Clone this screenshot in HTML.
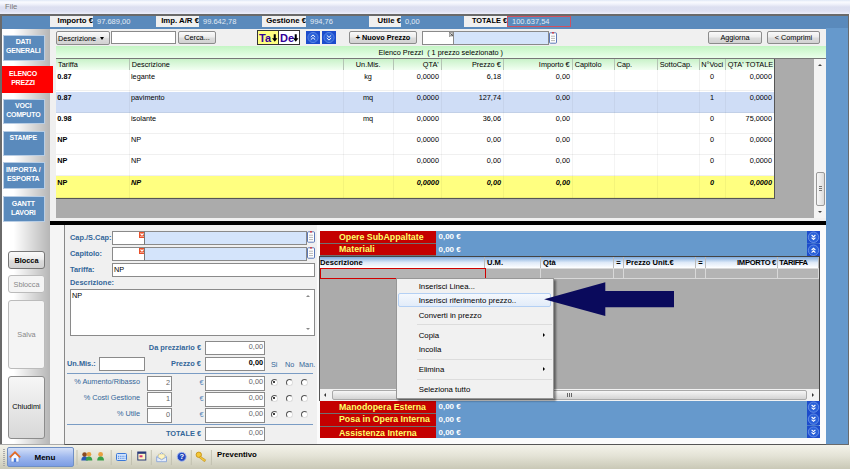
<!DOCTYPE html>
<html lang="it">
<head>
<meta charset="utf-8">
<title>Preventivo - Elenco Prezzi</title>
<style>
*{box-sizing:border-box;margin:0;padding:0}
html,body{width:850px;height:469px;overflow:hidden;background:#fff}
body{position:relative;font-family:"Liberation Sans",sans-serif;font-size:7.3px;color:#000;line-height:1}
.a{position:absolute;white-space:nowrap}
.b{font-weight:bold}
.r{text-align:right}
.c{text-align:center}
/* top */
#menubar{left:0;top:0;width:850px;height:14px;background:linear-gradient(#dfe8f6 0,#fafbfe 2px,#f1f3fb 4px,#dcdff0 7px,#dde0f1 11px,#eceefa 14px)}
#file{left:5px;top:3.2px;font-size:7.7px;color:#777}
#frame{left:0;top:14.3px;width:848.8px;height:430.7px;background:#6a6a6a}
#band{left:1.7px;top:15.6px;width:846.5px;height:13px;background:#5a8abc}
#rightcol{left:826px;top:28.3px;width:22.2px;height:416.2px;background:#6699cc}
#rightwhite{left:849px;top:14px;width:1px;height:431px;background:#fff}
.lab{top:16px;height:11px;background:#f0f0f0;font-weight:bold;font-size:7.8px;text-align:right;padding-top:1px;padding-right:0;overflow:hidden}
.val{top:16px;height:11px;background:#5a8abc;color:#e2eaf5;font-size:7.5px;padding:1.5px 0 0 4px}
/* sidebar */
#side{left:1.7px;top:28.5px;width:48.3px;height:416px;background:linear-gradient(90deg,#fff 0,#fff 24%,#b6b6b6 100%)}
.sb{left:3px;width:41.5px;padding-right:1px;background:#5a8abc;border:1px solid #b8cde4;color:#fff;font-weight:bold;font-size:7px;letter-spacing:-0.2px;text-align:center;line-height:9.2px;white-space:normal;padding-top:1.5px}
#content{left:50px;top:29px;width:776px;height:193px;background:#f0f0f0}
.btn{border:1px solid #8c8c8c;border-radius:2px;background:linear-gradient(#fafafa,#ececec 45%,#dcdcdc 55%,#d2d2d2);text-align:center;font-size:7.3px}
.inp{border:1px solid #8a8a8a;background:#fff}
.hd{top:59.3px;height:11px;background:linear-gradient(#c9f2c9,#f2fff2);border-right:1px solid #b4c4b4;padding:2px 2px 0 2px;font-size:7.3px;overflow:hidden}
.row{left:56px;width:718px;height:21px;border-bottom:1px solid rgba(0,0,0,0.06)}
.cell{top:2.3px;font-size:7.3px}
.vl{top:70px;width:1px;height:128px;background:rgba(0,0,0,0.045)}
</style>
</head>
<body>
<div class="a" id="menubar"></div>
<div class="a" id="file">File</div>
<div class="a" id="frame"></div>
<div class="a" id="band"></div>
<div class="a" id="rightcol"></div>
<div class="a" id="rightwhite"></div>

<!-- info band -->
<div class="a lab" style="left:50px;width:43px">Importo €</div>
<div class="a val" style="left:93px;width:63px">97.689,00</div>
<div class="a lab" style="left:156px;width:43px">Imp. A/R €</div>
<div class="a val" style="left:199px;width:63px">99.642,78</div>
<div class="a lab" style="left:262px;width:44px">Gestione €</div>
<div class="a val" style="left:306px;width:63px">994,76</div>
<div class="a lab" style="left:369px;width:32px">Utile €</div>
<div class="a val" style="left:401px;width:63px">0,00</div>
<div class="a lab" style="left:464px;width:43px;font-size:7.4px;padding-top:1.3px">TOTALE €</div>
<div class="a val" style="left:507px;width:64px;border:1px solid #d05060;padding-top:1px;padding-left:4px">100.637,54</div>

<!-- sidebar -->
<div class="a" id="side"></div>
<div class="a sb" style="top:34.7px;height:26.3px">DATI GENERALI</div>
<div class="a sb" style="left:2px;top:66px;width:51px;height:26.5px;background:#ff0000;border:1px solid #ff0000;padding-right:9px;z-index:3">ELENCO PREZZI</div>
<div class="a sb" style="top:98.5px;height:25.5px">VOCI COMPUTO</div>
<div class="a sb" style="top:130.5px;height:25.5px">STAMPE</div>
<div class="a sb" style="top:162px;height:27px;letter-spacing:-0.1px">IMPORTA / ESPORTA</div>
<div class="a sb" style="top:196px;height:26px">GANTT LAVORI</div>

<div class="a" id="content"></div>
<!-- toolbar -->
<div class="a btn" style="left:56px;top:31px;width:54px;height:14px;text-align:left;padding:2.5px 0 0 1px">Descrizione</div>
<div class="a" style="left:100px;top:37px;width:0;height:0;border-left:2.5px solid transparent;border-right:2.5px solid transparent;border-top:3px solid #000"></div>
<div class="a inp" style="left:111px;top:31px;width:65px;height:13px"></div>
<div class="a btn" style="left:178px;top:31px;width:38px;height:13px;padding-top:2px">Cerca...</div>
<div class="a b" style="left:257px;top:30px;width:22px;height:15px;background:#ffff80;border:1px solid #333;color:#330099;font-size:11px;padding:1.5px 0 0 1px">Ta</div><svg class="a" style="left:272px;top:33.5px" width="5.5" height="8.5" viewBox="0 0 7 10"><path d="M2.2 0 H4.8 V5 H7 L3.5 9.5 L0 5 H2.2 Z" fill="#000"/></svg>
<div class="a b" style="left:278px;top:30px;width:22px;height:15px;background:#fff;border:1px solid #333;color:#330099;font-size:11px;padding:1.5px 0 0 1px">De</div><svg class="a" style="left:293.3px;top:33.5px" width="5.5" height="8.5" viewBox="0 0 7 10"><path d="M2.2 0 H4.8 V5 H7 L3.5 9.5 L0 5 H2.2 Z" fill="#000"/></svg>
<svg class="a" style="left:305.9px;top:31px" width="14" height="13" viewBox="0 0 14 13"><rect width="14" height="13" fill="#1c4ccc"/><circle cx="7" cy="6.5" r="5.1" fill="#2a60d8" stroke="#6a96ea" stroke-width="0.7"/><path d="M4.8 6 L7 3.9 L9.2 6 M4.8 8.7 L7 6.6 L9.2 8.7" fill="none" stroke="#fff" stroke-width="1"/></svg>
<svg class="a" style="left:321.9px;top:31px" width="14" height="13" viewBox="0 0 14 13"><rect width="14" height="13" fill="#1c4ccc"/><circle cx="7" cy="6.5" r="5.1" fill="#2a60d8" stroke="#6a96ea" stroke-width="0.7"/><path d="M4.8 4.3 L7 6.4 L9.2 4.3 M4.8 7 L7 9.1 L9.2 7" fill="none" stroke="#fff" stroke-width="1"/></svg>
<div class="a btn b" style="left:349px;top:31px;width:68px;height:13px;padding-top:2px">+ Nuovo Prezzo</div>
<div class="a inp" style="left:422px;top:31px;width:32px;height:14px"></div>
<svg class="a" style="left:448.5px;top:31.5px" width="5.5" height="5.5" viewBox="0 0 6 6"><rect width="6" height="6" fill="#d8d8d8" stroke="#666" stroke-width="1"/><path d="M1.5 1.5 L4.5 4.5 M4.5 1.5 L1.5 4.5" stroke="#444" stroke-width="0.9"/></svg>
<div class="a inp" style="left:453px;top:31px;width:96px;height:14px;background:#d4e4fb"></div>
<svg class="a" style="left:548.5px;top:31.5px" width="8" height="12" viewBox="0 0 8 12"><rect x="0.5" y="0.8" width="7" height="10.4" rx="0.8" fill="#fff" stroke="#4a6ab0" stroke-width="0.9"/><path d="M2 4.2 H6 M2 6.4 H6 M2 8.6 H6" stroke="#9a9a9a" stroke-width="0.7"/><path d="M2.8 0.3 H5.2 L4 2.2 Z" fill="#e02020"/></svg>
<div class="a btn" style="left:708px;top:31px;width:54px;height:13px;padding-top:2px">Aggiorna</div>
<div class="a btn" style="left:767px;top:31px;width:53px;height:13px;padding-top:2px">&lt; Comprimi</div>

<!-- green caption -->
<div class="a c" style="left:56px;top:46.4px;width:769.5px;height:12px;background:linear-gradient(#c4f5c4,#eaffea);padding-top:2.6px;font-size:7.3px">Elenco Prezzi&nbsp; ( 1 prezzo selezionato )</div>

<!-- table -->
<div class="a" style="left:56px;top:58px;width:770px;height:160px;background:#ababab;border-top:1px solid #777"></div>
<div class="a" style="left:814px;top:59px;width:12px;height:159px;background:#f4f4f4"></div>
<div class="a" style="left:818px;top:64px;width:0;height:0;border-left:2px solid transparent;border-right:2px solid transparent;border-bottom:2.5px solid #444"></div>
<div class="a" style="left:818px;top:211px;width:0;height:0;border-left:2px solid transparent;border-right:2px solid transparent;border-top:2.5px solid #444"></div>
<div class="a" style="left:816px;top:172px;width:8.5px;height:33.5px;border:1px solid #999;border-radius:2px;background:linear-gradient(90deg,#f8f8f8,#dcdcdc)"></div>
<div class="a" style="left:819px;top:186px;width:3px;height:5px;background:repeating-linear-gradient(#777 0,#777 1px,transparent 1px,transparent 2px)"></div>

<div class="a" style="left:56px;top:69px;width:718px;height:129px;background:#fff"></div>
<div class="a hd" style="left:56px;width:73.7px">Tariffa</div>
<div class="a hd" style="left:129.7px;width:214px">Descrizione</div>
<div class="a hd c" style="left:343.7px;width:50px">Un.Mis.</div>
<div class="a hd r" style="left:393.7px;width:48px">QTA'</div>
<div class="a hd r" style="left:441.7px;width:62px">Prezzo €</div>
<div class="a hd r" style="left:503.7px;width:69px">Importo €</div>
<div class="a hd" style="left:572.7px;width:42px">Capitolo</div>
<div class="a hd" style="left:614.7px;width:43px">Cap.</div>
<div class="a hd" style="left:657.7px;width:42px">SottoCap.</div>
<div class="a hd c" style="left:699.7px;width:26px;padding-left:0;padding-right:0">N°Voci</div>
<div class="a hd" style="left:725.7px;width:48.3px;border-right:0">QTA' TOTALE</div>
<div class="a row" style="top:70.3px;height:21.2px;background:#fff;"><span class="a cell b" style="left:1.3px">0.87</span><span class="a cell" style="left:75px">legante</span><span class="a cell c" style="left:287px;width:50px">kg</span><span class="a cell r" style="left:337px;width:46px">0,0000</span><span class="a cell r" style="left:385px;width:60px">6,18</span><span class="a cell r" style="left:447px;width:67px">0,00</span><span class="a cell c" style="left:643px;width:26px">0</span><span class="a cell r" style="left:669px;width:47px">0,0000</span></div>
<div class="a row" style="top:91.5px;height:21.2px;background:#cfddf6;"><span class="a cell b" style="left:1.3px">0.87</span><span class="a cell" style="left:75px">pavimento</span><span class="a cell c" style="left:287px;width:50px">mq</span><span class="a cell r" style="left:337px;width:46px">0,0000</span><span class="a cell r" style="left:385px;width:60px">127,74</span><span class="a cell r" style="left:447px;width:67px">0,00</span><span class="a cell c" style="left:643px;width:26px">1</span><span class="a cell r" style="left:669px;width:47px">0,0000</span></div>
<div class="a row" style="top:112.7px;height:21.2px;background:#fff;"><span class="a cell b" style="left:1.3px">0.98</span><span class="a cell" style="left:75px">isolante</span><span class="a cell c" style="left:287px;width:50px">mq</span><span class="a cell r" style="left:337px;width:46px">0,0000</span><span class="a cell r" style="left:385px;width:60px">36,06</span><span class="a cell r" style="left:447px;width:67px">0,00</span><span class="a cell c" style="left:643px;width:26px">0</span><span class="a cell r" style="left:669px;width:47px">75,0000</span></div>
<div class="a row" style="top:133.9px;height:21.2px;background:#fff;"><span class="a cell b" style="left:1.3px">NP</span><span class="a cell" style="left:75px">NP</span><span class="a cell c" style="left:287px;width:50px"></span><span class="a cell r" style="left:337px;width:46px">0,0000</span><span class="a cell r" style="left:385px;width:60px">0,00</span><span class="a cell r" style="left:447px;width:67px">0,00</span><span class="a cell c" style="left:643px;width:26px">0</span><span class="a cell r" style="left:669px;width:47px">0,0000</span></div>
<div class="a row" style="top:155.1px;height:21.2px;background:#fff;"><span class="a cell b" style="left:1.3px">NP</span><span class="a cell" style="left:75px">NP</span><span class="a cell c" style="left:287px;width:50px"></span><span class="a cell r" style="left:337px;width:46px">0,0000</span><span class="a cell r" style="left:385px;width:60px">0,00</span><span class="a cell r" style="left:447px;width:67px">0,00</span><span class="a cell c" style="left:643px;width:26px">0</span><span class="a cell r" style="left:669px;width:47px">0,0000</span></div>
<div class="a row" style="top:176.3px;height:21.6px;background:#ffff80;font-weight:bold;font-style:italic"><span class="a cell b" style="left:1.3px;font-style:normal">NP</span><span class="a cell" style="left:75px">NP</span><span class="a cell c" style="left:287px;width:50px"></span><span class="a cell r" style="left:337px;width:46px">0,0000</span><span class="a cell r" style="left:385px;width:60px">0,00</span><span class="a cell r" style="left:447px;width:67px">0,00</span><span class="a cell c" style="left:643px;width:26px">0</span><span class="a cell r" style="left:669px;width:47px">0,0000</span></div>

<div class="a" style="left:56px;top:197.6px;width:719px;height:1px;background:#555"></div>
<div class="a" style="left:774px;top:59px;width:1px;height:139.5px;background:#555"></div>
<div class="a vl" style="left:128.7px"></div><div class="a vl" style="left:342.7px"></div><div class="a vl" style="left:392.7px"></div><div class="a vl" style="left:440.7px"></div><div class="a vl" style="left:502.7px"></div><div class="a vl" style="left:571.7px"></div><div class="a vl" style="left:613.7px"></div><div class="a vl" style="left:656.7px"></div><div class="a vl" style="left:698.7px"></div><div class="a vl" style="left:724.7px"></div>
<div class="a" style="left:50px;top:218px;width:776px;height:4px;background:#f0f0f0"></div>
<div class="a" style="left:50px;top:221.3px;width:776px;height:3.7px;background:#000"></div>


<!-- lower area -->
<div class="a" style="left:50px;top:225px;width:776px;height:220px;background:#f5f5f5"></div>
<div class="a" style="left:63.5px;top:225px;width:762.5px;height:220px;background:#f0f0f0;border-left:1px solid #888;border-bottom:1px solid #555"></div>

<div class="a" style="left:317px;top:225px;width:509px;height:219px;background:#fbfbfb"></div>
<!-- sidebar lower buttons -->
<div class="a btn b" style="left:8px;top:251px;width:37px;height:18px;padding-top:5px;border-radius:3px;border-color:#777">Blocca</div>
<div class="a btn" style="left:8px;top:275px;width:37px;height:18px;padding-top:5px;border-radius:3px;color:#888;background:#f4f4f4;border-color:#bbb">Sblocca</div>
<div class="a btn" style="left:8px;top:300px;width:37px;height:68.5px;padding-top:30px;border-radius:3px;color:#888;background:#f4f4f4;border-color:#bbb">Salva</div>
<div class="a btn" style="left:8px;top:376px;width:37px;height:62.5px;padding-top:26px;border-radius:3px;background:linear-gradient(#f6f6f6,#d8d8d8)">Chiudimi</div>

<!-- form -->
<style>
.fl{color:#336699;font-weight:bold;font-size:7.4px}
.fn{color:#336699;font-size:7.3px}
.num{border:1px solid #8a8a8a;background:#fff;text-align:right;color:#666;font-size:7.3px;padding:1px 1px 0 0}
.rad{width:7px;height:7px;margin:-0.5px 0 0 -0.5px;border-radius:50%;border:1px solid #555;border-right-color:#ddd;border-bottom-color:#ddd;background:#fff}
.rad.on::after{content:"";position:absolute;left:1.3px;top:1.3px;width:2.4px;height:2.4px;border-radius:50%;background:#000}
.lst{width:7px;height:12px;border:1px solid #777;background:repeating-linear-gradient(#fff 0,#fff 2px,#999 2px,#999 3px)}
.xic{width:5px;height:5px;background:#e04020;border:1px solid #c03010}
</style>
<div class="a fl" style="left:70px;top:234px">Cap./S.Cap:</div>
<div class="a inp" style="left:112px;top:231px;width:33px;height:14px"></div>
<svg class="a" style="left:138.8px;top:231.5px" width="6" height="6" viewBox="0 0 6 6"><rect width="6" height="6" fill="#e8502a"/><path d="M1.5 1.5 L4.5 4.5 M4.5 1.5 L1.5 4.5" stroke="#fff" stroke-width="1.1"/></svg>
<div class="a inp" style="left:144px;top:231px;width:163px;height:14px;background:#d4e4fb;border-left:1px solid #777"></div>
<svg class="a" style="left:307px;top:230.5px" width="8" height="12" viewBox="0 0 8 12"><rect x="0.5" y="0.8" width="7" height="10.4" rx="0.8" fill="#fff" stroke="#4a6ab0" stroke-width="0.9"/><path d="M2 4.2 H6 M2 6.4 H6 M2 8.6 H6" stroke="#9a9a9a" stroke-width="0.7"/><path d="M2.8 0.3 H5.2 L4 2.2 Z" fill="#e02020"/></svg>
<div class="a fl" style="left:70px;top:250px">Capitolo:</div>
<div class="a inp" style="left:112px;top:247px;width:33px;height:14px"></div>
<svg class="a" style="left:138.8px;top:247.5px" width="6" height="6" viewBox="0 0 6 6"><rect width="6" height="6" fill="#e8502a"/><path d="M1.5 1.5 L4.5 4.5 M4.5 1.5 L1.5 4.5" stroke="#fff" stroke-width="1.1"/></svg>
<div class="a inp" style="left:144px;top:247px;width:163px;height:14px;background:#d4e4fb;border-left:1px solid #777"></div>
<svg class="a" style="left:307px;top:246.5px" width="8" height="12" viewBox="0 0 8 12"><rect x="0.5" y="0.8" width="7" height="10.4" rx="0.8" fill="#fff" stroke="#4a6ab0" stroke-width="0.9"/><path d="M2 4.2 H6 M2 6.4 H6 M2 8.6 H6" stroke="#9a9a9a" stroke-width="0.7"/><path d="M2.8 0.3 H5.2 L4 2.2 Z" fill="#e02020"/></svg>
<div class="a fl" style="left:70px;top:266px">Tariffa:</div>
<div class="a inp" style="left:112px;top:263px;width:203px;height:14px;padding:1.5px 0 0 1px;font-size:7.3px">NP</div>
<div class="a fl" style="left:70px;top:279px">Descrizione:</div>
<div class="a inp" style="left:70px;top:289px;width:245px;height:47px;padding:1.5px 0 0 1px;font-size:7.3px">NP</div>
<div class="a" style="left:306px;top:295px;width:0;height:0;border-left:2px solid transparent;border-right:2px solid transparent;border-bottom:2.5px solid #888"></div>
<div class="a" style="left:306px;top:328px;width:0;height:0;border-left:2px solid transparent;border-right:2px solid transparent;border-top:2.5px solid #888"></div>

<div class="a fl r" style="left:120px;top:344px;width:81px">Da prezziario €</div>
<div class="a num" style="left:205px;top:341px;width:60px;height:14px">0,00</div>
<div class="a fl" style="left:67px;top:360px">Un.Mis.:</div>
<div class="a inp" style="left:99px;top:357px;width:46px;height:14px"></div>
<div class="a fl r" style="left:120px;top:360px;width:81px">Prezzo €</div>
<div class="a num b" style="left:205px;top:357px;width:60px;height:14px;color:#000">0,00</div>
<div class="a fn" style="left:271px;top:361px">Si</div>
<div class="a fn" style="left:285px;top:361px">No</div>
<div class="a fn" style="left:299px;top:361px">Man.</div>
<div class="a" style="left:67px;top:373px;width:246px;height:1px;background:#7a9cc4"></div>

<div class="a fn r" style="left:60px;top:378px;width:80px">% Aumento/Ribasso</div>
<div class="a num" style="left:147px;top:376px;width:25px;height:15px;padding-top:2px">2</div>
<div class="a fn" style="left:199.5px;top:378.5px;color:#5a88b8">€</div>
<div class="a num" style="left:205px;top:376px;width:60px;height:15px">0,00</div>
<div class="a rad on" style="left:271px;top:379px"></div><div class="a rad" style="left:286px;top:379px"></div><div class="a rad" style="left:301px;top:379px"></div>

<div class="a fn r" style="left:60px;top:394px;width:80px">% Costi Gestione</div>
<div class="a num" style="left:147px;top:392px;width:25px;height:15px;padding-top:2px">1</div>
<div class="a fn" style="left:199.5px;top:394.5px;color:#5a88b8">€</div>
<div class="a num" style="left:205px;top:392px;width:60px;height:15px">0,00</div>
<div class="a rad on" style="left:271px;top:395px"></div><div class="a rad" style="left:286px;top:395px"></div><div class="a rad" style="left:301px;top:395px"></div>

<div class="a fn r" style="left:60px;top:410px;width:80px">% Utile</div>
<div class="a num" style="left:147px;top:408px;width:25px;height:15px;padding-top:2px">0</div>
<div class="a fn" style="left:199.5px;top:410.5px;color:#5a88b8">€</div>
<div class="a num" style="left:205px;top:408px;width:60px;height:15px">0,00</div>
<div class="a rad on" style="left:271px;top:411px"></div><div class="a rad" style="left:286px;top:411px"></div><div class="a rad" style="left:301px;top:411px"></div>

<div class="a" style="left:67px;top:424px;width:246px;height:1px;background:#7a9cc4"></div>
<div class="a fl r" style="left:120px;top:430px;width:81px">TOTALE €</div>
<div class="a num" style="left:205px;top:427px;width:60px;height:14px">0,00</div>

<!-- right panel -->
<style>
.red{left:320px;width:116px;height:12px;background:#c40000;color:#ffff66;font-weight:bold;font-size:8.8px;padding:1.5px 0 0 19px;border-bottom:1px solid #707070}
.blu{left:436px;width:383px;height:12px;background:#6699cc;color:#fff;font-weight:bold;font-size:8px;padding:2px 0 0 2.5px}
.gh{top:256px;height:12px;background:linear-gradient(#6fa0d8,#dfeaf8 55%,#fff);font-weight:bold;font-size:7.6px;padding-top:3px;border-right:1px solid #bbb;overflow:hidden}
.gc{top:268px;height:11px;background:#b4b4b4;border:1px solid #d8d8d8;border-left:0}
.mi{left:418.7px;font-size:7.8px;color:#000}
</style>
<div class="a red" style="top:231.2px;height:12.6px">Opere SubAppaltate</div><div class="a blu" style="top:231.2px;height:12.6px">0,00 €</div>
<div class="a red" style="top:243.8px;height:12.6px">Materiali</div><div class="a blu" style="top:243.8px;height:12.4px">0,00 €</div>
<div class="a" style="left:320px;top:256px;width:499px;height:145px;background:#ababab"></div>
<div class="a gh" style="left:320px;width:165px">Descrizione</div>
<div class="a gh" style="left:485px;width:56px;padding-left:2px">U.M.</div>
<div class="a gh" style="left:541px;width:73px;padding-left:2px">Qtà</div>
<div class="a gh c" style="left:614px;width:10px">=</div>
<div class="a gh" style="left:624px;width:72px;padding-left:2px">Prezzo Unit.€</div>
<div class="a gh c" style="left:696px;width:10px">=</div>
<div class="a gh r" style="left:706px;width:72px;padding-right:1px;letter-spacing:-0.3px">IMPORTO €</div>
<div class="a gh" style="left:778px;width:41px;padding-left:1.3px;letter-spacing:-0.45px">TARIFFA</div>
<div class="a gc" style="left:320px;width:166px;border:1px solid #d00000"></div>
<div class="a gc" style="left:486px;width:55px"></div>
<div class="a gc" style="left:541px;width:73px"></div>
<div class="a gc" style="left:614px;width:10px"></div>
<div class="a gc" style="left:624px;width:72px"></div>
<div class="a gc" style="left:696px;width:10px"></div>
<div class="a gc" style="left:706px;width:72px"></div>
<div class="a gc" style="left:778px;width:41px"></div>
<!-- h scrollbar -->
<div class="a" style="left:320px;top:389px;width:499px;height:12px;background:#f2f2f2"></div>
<div class="a" style="left:332px;top:390px;width:475px;height:10px;border:1px solid #aaa;border-radius:2px;background:linear-gradient(#f6f6f6,#d4d4d4)"></div>
<div class="a" style="left:324px;top:393px;width:0;height:0;border-top:2px solid transparent;border-bottom:2px solid transparent;border-right:2.5px solid #333"></div>
<div class="a" style="left:812px;top:393px;width:0;height:0;border-top:2px solid transparent;border-bottom:2px solid transparent;border-left:2.5px solid #333"></div>
<div class="a" style="left:567px;top:393px;width:5px;height:4px;background:repeating-linear-gradient(90deg,#666 0,#666 1px,transparent 1px,transparent 2px)"></div>
<div class="a red" style="top:401px;height:12.9px">Manodopera Esterna</div><div class="a blu" style="top:401px;height:12.9px">0,00 €</div>
<div class="a red" style="top:413.9px;height:13.1px">Posa in Opera Interna</div><div class="a blu" style="top:413.9px;height:13.1px">0,00 €</div>
<div class="a red" style="top:427px;height:10.8px;border-bottom:0">Assistenza Interna</div><div class="a blu" style="top:427px;height:10.8px">0,00 €</div>

<svg class="a" style="left:807px;top:231px" width="13" height="12.6" viewBox="0 0 13 12.5" preserveAspectRatio="none"><rect width="13" height="12.5" fill="#1c4ccc"/><circle cx="6.5" cy="6.2" r="5.2" fill="#2a60d8" stroke="#7ea4ee" stroke-width="0.7"/><path d="M4.6 4 L6.5 5.8 L8.4 4 M4.6 6.6 L6.5 8.4 L8.4 6.6" fill="none" stroke="#fff" stroke-width="1.15"/></svg><svg class="a" style="left:807px;top:243.6px" width="13" height="12.6" viewBox="0 0 13 12.5" preserveAspectRatio="none"><rect width="13" height="12.5" fill="#1c4ccc"/><circle cx="6.5" cy="6.2" r="5.2" fill="#2a60d8" stroke="#7ea4ee" stroke-width="0.7"/><path d="M4.6 6 L6.5 4.2 L8.4 6 M4.6 8.6 L6.5 6.8 L8.4 8.6" fill="none" stroke="#fff" stroke-width="1.15"/></svg><svg class="a" style="left:807px;top:401px" width="13" height="12.4" viewBox="0 0 13 12.5" preserveAspectRatio="none"><rect width="13" height="12.5" fill="#1c4ccc"/><circle cx="6.5" cy="6.2" r="5.2" fill="#2a60d8" stroke="#7ea4ee" stroke-width="0.7"/><path d="M4.6 4 L6.5 5.8 L8.4 4 M4.6 6.6 L6.5 8.4 L8.4 6.6" fill="none" stroke="#fff" stroke-width="1.15"/></svg><svg class="a" style="left:807px;top:413.4px" width="13" height="12.4" viewBox="0 0 13 12.5" preserveAspectRatio="none"><rect width="13" height="12.5" fill="#1c4ccc"/><circle cx="6.5" cy="6.2" r="5.2" fill="#2a60d8" stroke="#7ea4ee" stroke-width="0.7"/><path d="M4.6 4 L6.5 5.8 L8.4 4 M4.6 6.6 L6.5 8.4 L8.4 6.6" fill="none" stroke="#fff" stroke-width="1.15"/></svg><svg class="a" style="left:807px;top:425.8px" width="13" height="12" viewBox="0 0 13 12.5" preserveAspectRatio="none"><rect width="13" height="12.5" fill="#1c4ccc"/><circle cx="6.5" cy="6.2" r="5.2" fill="#2a60d8" stroke="#7ea4ee" stroke-width="0.7"/><path d="M4.6 4 L6.5 5.8 L8.4 4 M4.6 6.6 L6.5 8.4 L8.4 6.6" fill="none" stroke="#fff" stroke-width="1.15"/></svg>
<div class="a" style="left:320px;top:256px;width:500px;height:1px;background:#444"></div><div class="a" style="left:819px;top:256px;width:1px;height:145px;background:#444"></div>
<div class="a" style="left:319.3px;top:256px;width:1px;height:145px;background:#555"></div>
<!-- context menu -->
<div class="a" style="left:396px;top:277.5px;width:157.5px;height:121px;background:#f1f1f1;border:1px solid #979797;box-shadow:1.5px 1.5px 2px rgba(0,0,0,.45)"></div>
<div class="a" style="left:398px;top:293.3px;width:152.5px;height:14px;border:1px solid #b4d0f4;border-radius:2px;background:linear-gradient(#f4f8fd,#e2ecf9)"></div>
<div class="a mi" style="top:283px">Inserisci Linea...</div>
<div class="a mi" style="top:297px">Inserisci riferimento prezzo..</div>
<div class="a mi" style="top:312px">Converti in prezzo</div>
<div class="a" style="left:417px;top:324px;width:135px;height:1px;background:#dcdcdc"></div>
<div class="a mi" style="top:332px">Copia</div>
<div class="a mi" style="top:346px">Incolla</div>
<div class="a" style="left:417px;top:359px;width:135px;height:1px;background:#dcdcdc"></div>
<div class="a mi" style="top:366px">Elimina</div>
<div class="a" style="left:417px;top:379px;width:135px;height:1px;background:#dcdcdc"></div>
<div class="a mi" style="top:386px">Seleziona tutto</div>
<div class="a" style="left:543px;top:333px;width:0;height:0;border-top:2px solid transparent;border-bottom:2px solid transparent;border-left:2.5px solid #000"></div>
<div class="a" style="left:543px;top:367px;width:0;height:0;border-top:2px solid transparent;border-bottom:2px solid transparent;border-left:2.5px solid #000"></div>
<!-- big arrow -->
<svg class="a" style="left:540px;top:280px" width="140" height="40" viewBox="0 0 140 40"><polygon points="4.1,19.2 65.3,2.2 65.3,11.1 134,11.1 134,27.3 65.3,27.3 65.3,36.1" fill="#0a0a5c"/></svg>

<!-- taskbar -->
<div class="a" style="left:0;top:445px;width:850px;height:24px;background:linear-gradient(#f4f3ea,#e4e3d6 45%,#c9c8b6)"></div>
<div class="a" style="left:0;top:444px;width:64px;height:1px;background:#aaa"></div>
<div class="a" style="left:3px;top:449px;width:2px;height:17px;background:repeating-linear-gradient(#aaa 0,#aaa 1px,transparent 1px,transparent 2px)"></div>
<div class="a b" style="left:7px;top:447px;width:67px;height:20px;border:1px solid #6f8fc4;border-radius:2px;background:linear-gradient(#d4e0f8,#9fb8ee 50%,#7c9de4);font-size:8px;padding:6px 0 0 26.5px">Menu</div>
<svg class="a" style="left:8.5px;top:450.5px" width="12" height="12" viewBox="0 0 12 12"><path d="M2 6 L6 2.200 L10 6 V11 H2 Z" fill="#f4f8ff" stroke="#7898d8" stroke-width="0.8"/><path d="M0.800 6.300 L6 1.200 L11.200 6.300" fill="none" stroke="#e86a20" stroke-width="1.700"/><rect x="4.800" y="7.200" width="2.400" height="3.800" fill="#4878d8"/></svg>
<svg class="a" style="left:76px;top:449px" width="140" height="18" viewBox="0 0 140 18">
<g stroke="#c2c1b0" stroke-width="1"><line x1="1" y1="1" x2="1" y2="16"/><line x1="35.2" y1="1" x2="35.2" y2="16"/><line x1="55.5" y1="1" x2="55.5" y2="16"/><line x1="75.3" y1="1" x2="75.3" y2="16"/><line x1="95.4" y1="1" x2="95.4" y2="16"/><line x1="115.3" y1="1" x2="115.3" y2="16"/><line x1="135.4" y1="1" x2="135.4" y2="16"/></g>
<circle cx="8.6" cy="5.6" r="2.3" fill="#8a4a20"/><path d="M5.3 11.5 Q5.3 7.6 8.6 7.6 Q11.9 7.6 11.9 11.5 Z" fill="#2858b8"/>
<circle cx="13" cy="5.3" r="2.3" fill="#e8a040"/><path d="M9.8 11.5 Q9.8 7.4 13 7.4 Q16.3 7.4 16.3 11.5 Z" fill="#38a048"/>
<circle cx="24.6" cy="5.4" r="2.4" fill="#e8a040"/><path d="M21.2 11.6 Q21.2 7.5 24.6 7.5 Q28 7.5 28 11.6 Z" fill="#38a048"/>
<rect x="40.5" y="4.5" width="10" height="7" rx="1" fill="#cfe2fc" stroke="#3a78d8"/><path d="M42 7.3 H49.5 M42 9.3 H49.5" stroke="#3a78d8" stroke-width="0.9" stroke-dasharray="1 0.8"/>
<rect x="61.8" y="3" width="8" height="8" fill="#fff6c8" stroke="#283878"/><rect x="61.8" y="3" width="8" height="1.8" fill="#283878"/><rect x="63.5" y="6.3" width="3" height="2" fill="#d83070"/>
<path d="M80.7 7.8 L85.6 3.6 L90.5 7.8 V12.7 H80.7 Z" fill="#e4ecfb" stroke="#88a4d8" stroke-width="0.9"/><path d="M82.5 5.2 H88.7 V8.5 L85.6 10.2 L82.5 8.5 Z" fill="#fff4c0" stroke="#c8b870" stroke-width="0.4"/><path d="M80.7 7.8 L85.6 10.8 L90.5 7.8" fill="none" stroke="#88a4d8" stroke-width="0.8"/>
<circle cx="105.7" cy="7.8" r="4.5" fill="#2448c0" stroke="#a8bcf0" stroke-width="0.9"/><text x="105.7" y="10.4" font-family="Liberation Sans, sans-serif" font-size="7.5" font-weight="bold" fill="#fff" text-anchor="middle">?</text>
<circle cx="122.8" cy="5.8" r="2.7" fill="#f4c838" stroke="#c08c10" stroke-width="0.8"/><path d="M124.3 7.3 L129.6 10.8 L128.8 12.6 L126.8 11.6 L125.8 10.6 L123.3 8.8 Z" fill="#f4c838" stroke="#c08c10" stroke-width="0.6"/>
</svg>
<div class="a b" style="left:217px;top:451px;font-size:7.8px">Preventivo</div>
</body>
</html>
